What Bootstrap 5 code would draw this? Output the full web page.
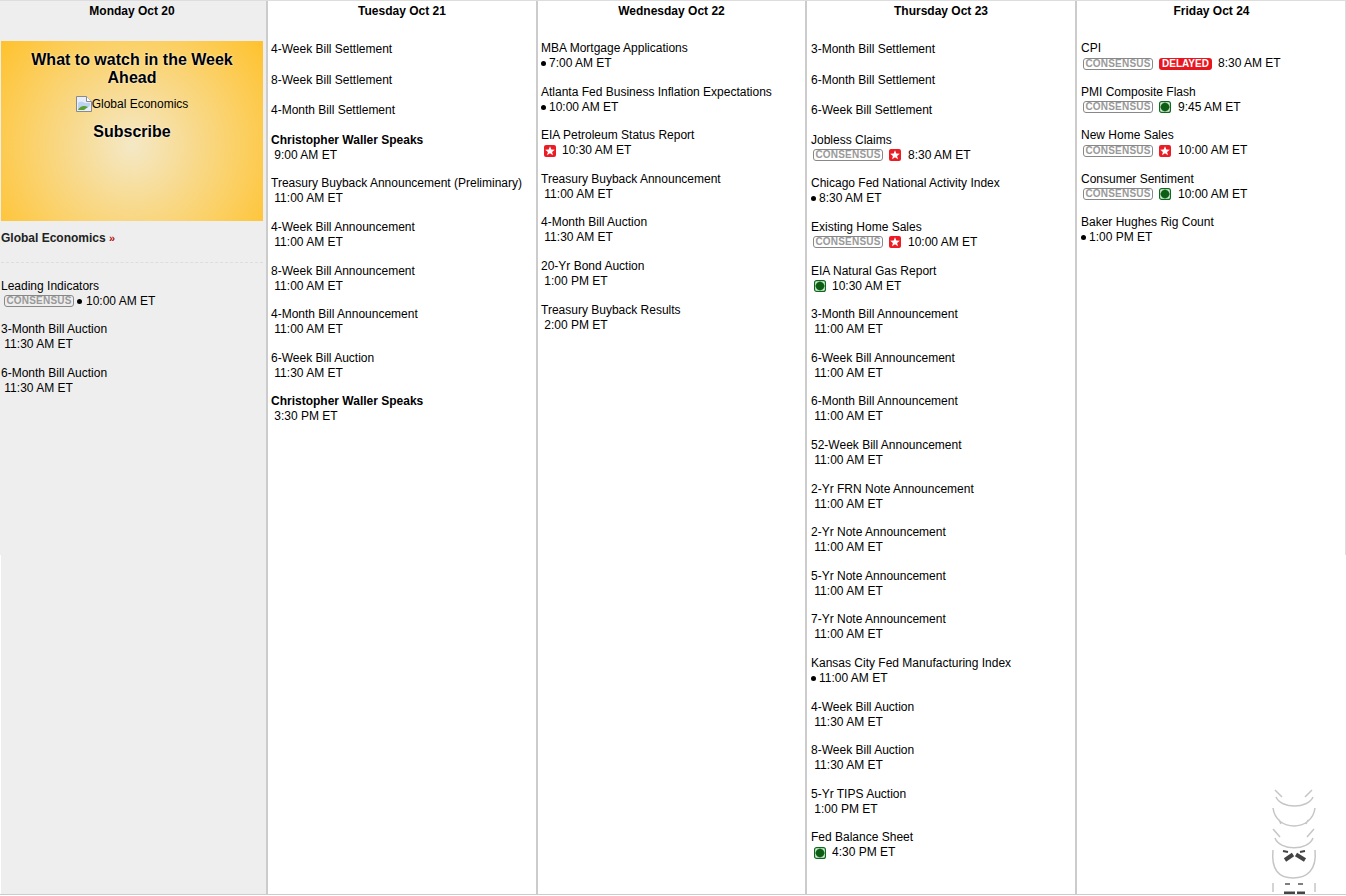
<!DOCTYPE html>
<html lang="en"><head><meta charset="utf-8"><title>Calendar</title>
<link href="https://cdn.jsdelivr.net/npm/bootstrap@5.3.0/dist/css/bootstrap.min.css" rel="stylesheet">
<style>
html,body{background:#fff;overflow:hidden;height:896px}
body{font:12px/15px "Liberation Sans",Arial,sans-serif;color:#000}
.week-grid{height:895px;position:relative;border-top:1px solid #ddd;border-bottom:1px solid #ccc}
.week-grid::before,.week-grid::after{content:"";position:absolute;top:0;width:1px;height:554px}
.week-grid::before{left:0;background:#eee}
.week-grid::after{right:0;background:#ddd}
.day-col{border-right:2px solid #ccc;flex:0 0 auto}
.day-col.c1{width:267px;background:#eee;margin-left:1px}
.day-col.c2{width:270px}.day-col.c3{width:269px}.day-col.c4{width:270px}.day-col.c5{width:269px;border-right:0}
.day-head{font-weight:700;text-align:center;line-height:15px;padding-top:3px;height:18px}
.c1 .day-head{padding-right:3px}
.ev-list{padding:0 3px}
.c4 .ev-list,.c5 .ev-list{padding-left:4px}
.c1 .ev-list{padding:0}
.c2 .ev-list,.c4 .ev-list{padding-top:23.45px}
.c3 .ev-list,.c5 .ev-list{padding-top:22px}
.ev{margin-bottom:13.61px}
.ev.solo{margin-bottom:15.1px}
.ev-name{display:block}
.ev-name.strong{font-weight:700}
.ev-time{display:flex;align-items:center;white-space:pre;height:15px}
.tag-c{font-size:10px;font-weight:700;line-height:10px;letter-spacing:.2px;color:#999;border:1px solid #888;border-radius:3px;width:70px;height:12px;text-align:center;margin-left:2px;margin-right:6px;flex:none}
.c1 .tag-c{margin-left:3px}
.tag-d{font-size:10px;font-weight:700;line-height:12px;color:#fff;background:#e8161e;border-radius:3px;width:53px;height:12px;text-align:center;margin-right:6px;flex:none}
.ico{width:12px;height:12px;flex:none;display:block;margin-right:7px}
.ico.first{margin-left:3px;margin-right:6px}
.dot{width:5px;height:5px;border-radius:50%;background:#000;flex:none;margin-right:3px}
.tag-c + .dot{margin-left:-3px;margin-right:4px}
.promo{width:262px;height:180px;margin-top:22px;background:radial-gradient(circle farthest-corner at 50% 58%,#f4e8c6 0%,#ffc22d 100%);text-align:center;padding-top:10px}
.promo-title{font-size:16px;line-height:18px;font-weight:700;text-shadow:0 0 2px #fff}
.promo-alt{display:flex;justify-content:center;align-items:center;height:16px;margin-top:9px}
.promo-sub{font-size:16px;line-height:18px;font-weight:700;text-shadow:0 0 2px #fff;margin-top:11px}
.promo-link{font-weight:700;margin-top:10px;height:15px;color:#222}
.promo-link b{color:#b01010;font-size:11px}
.promo-rule{border-top:1px dashed #ddd;width:262px;margin:16px 0 15.7px}
.spin{position:absolute;right:26px;bottom:0;width:50px;height:106px}
</style></head><body>
<div class="week-grid d-flex">
<div class="day-col c1"><div class="day-head">Monday Oct 20</div>
<div class="ev-list">
<div class="promo"><div class="promo-title">What to watch in the Week<br>Ahead</div>
<div class="promo-alt"><svg width="16" height="16" viewBox="0 0 16 16"><path d="M.5.5h10l5 5v10H.5z" fill="#e8eef8" stroke="#8a8a8a"/><path d="M10.500.5v5h5" fill="#fff" stroke="#8a8a8a"/><path d="M2 7c2-2 5-1 7 0l5 0v3l-7 4H2z" fill="#bcd4f2"/><path d="M2 14c2-4 6-5 10-3l-4 3z" fill="#5a9e2e"/></svg><span>Global Economics</span></div>
<div class="promo-sub">Subscribe</div></div>
<div class="promo-link">Global Economics <b>»</b></div>
<div class="promo-rule"></div>
<div class="ev"><span class="ev-name">Leading Indicators</span><span class="ev-time"><span class="tag-c">CONSENSUS</span><i class="dot"></i>10:00 AM ET</span></div>
<div class="ev"><span class="ev-name">3-Month Bill Auction</span><span class="ev-time"> 11:30 AM ET</span></div>
<div class="ev"><span class="ev-name">6-Month Bill Auction</span><span class="ev-time"> 11:30 AM ET</span></div>
</div></div>
<div class="day-col c2"><div class="day-head">Tuesday Oct 21</div><div class="ev-list" id="tue"></div></div>
<div class="day-col c3"><div class="day-head">Wednesday Oct 22</div><div class="ev-list" id="wed"></div></div>
<div class="day-col c4"><div class="day-head">Thursday Oct 23</div><div class="ev-list" id="thu"></div></div>
<div class="day-col c5"><div class="day-head">Friday Oct 24</div><div class="ev-list" id="fri"></div></div>
<svg class="spin" viewBox="1270 788 50 106" fill="none" stroke="#c6c6c6" stroke-width="1.500">
<path d="M1275 790l7 7M1312 790l-7 7M1276 797c5 12 32 12 37 0"/>
<path d="M1273 808c3 24 39 24 42 0M1279 820l2 4M1308 820l-2 4"/>
<path d="M1273 829l7 8M1314 829l-7 8M1275 838c5 13 33 13 38 0"/>
<path d="M1273 850c-2 20 6 28 20 28s24-8 22-28"/>
<path d="M1285 860l8-5.500M1305 860l-9-5.500" stroke="#444" stroke-width="4"/><path d="M1283 851l5 1M1305 851l-5 1" stroke="#444" stroke-width="2"/>
<path d="M1273 883v9M1315 883v9"/><path d="M1285 884h5M1298 884h5" stroke="#555" stroke-width="1.500"/><path d="M1284 893h11M1297 893h8" stroke="#444" stroke-width="3"/>
</svg>
</div>
<script>
const star='<svg class="ico" viewBox="0 0 12 12"><rect width="12" height="12" rx="2" fill="#ec1c24"/><path d="M6 1.200 7.300 4.600 10.800 4.700 8.100 6.900 9 10.200 6 8.300 3 10.200 3.900 6.900 1.200 4.700 4.700 4.600z" fill="#fff"/></svg>';
const star1=star.replace('class="ico"','class="ico first"');
const gem='<svg class="ico" viewBox="0 0 12 12"><rect x=".6" y=".6" width="10.800" height="10.800" rx="2" fill="#e6f2e6" stroke="#0a6b1a" stroke-width="1.200"/><path d="M6 1.400 9.200 2.800 10.600 6 9.200 9.200 6 10.600 2.800 9.200 1.400 6 2.800 2.800z" fill="#0b5e14"/></svg>';
const gem1=gem.replace('class="ico"','class="ico first"');
const C='<span class="tag-c">CONSENSUS</span>',D='<span class="tag-d">DELAYED</span>',dot='<i class="dot"></i>';
function ev(n,t,m,b){return t?`<div class="ev"><span class="ev-name${b?' strong':''}">${n}</span><span class="ev-time">${m||' '}${t}</span></div>`:`<div class="ev solo"><span class="ev-name">${n}</span></div>`}
const data={tue:[['4-Week Bill Settlement'],['8-Week Bill Settlement'],['4-Month Bill Settlement'],['Christopher Waller Speaks','9:00 AM ET','',1],['Treasury Buyback Announcement (Preliminary)','11:00 AM ET'],['4-Week Bill Announcement','11:00 AM ET'],['8-Week Bill Announcement','11:00 AM ET'],['4-Month Bill Announcement','11:00 AM ET'],['6-Week Bill Auction','11:30 AM ET'],['Christopher Waller Speaks','3:30 PM ET','',1]],
wed:[['MBA Mortgage Applications','7:00 AM ET',dot],['Atlanta Fed Business Inflation Expectations','10:00 AM ET',dot],['EIA Petroleum Status Report','10:30 AM ET',star1],['Treasury Buyback Announcement','11:00 AM ET'],['4-Month Bill Auction','11:30 AM ET'],['20-Yr Bond Auction','1:00 PM ET'],['Treasury Buyback Results','2:00 PM ET']],
thu:[['3-Month Bill Settlement'],['6-Month Bill Settlement'],['6-Week Bill Settlement'],['Jobless Claims','8:30 AM ET',C+star],['Chicago Fed National Activity Index','8:30 AM ET',dot],['Existing Home Sales','10:00 AM ET',C+star],['EIA Natural Gas Report','10:30 AM ET',gem1],['3-Month Bill Announcement','11:00 AM ET'],['6-Week Bill Announcement','11:00 AM ET'],['6-Month Bill Announcement','11:00 AM ET'],['52-Week Bill Announcement','11:00 AM ET'],['2-Yr FRN Note Announcement','11:00 AM ET'],['2-Yr Note Announcement','11:00 AM ET'],['5-Yr Note Announcement','11:00 AM ET'],['7-Yr Note Announcement','11:00 AM ET'],['Kansas City Fed Manufacturing Index','11:00 AM ET',dot],['4-Week Bill Auction','11:30 AM ET'],['8-Week Bill Auction','11:30 AM ET'],['5-Yr TIPS Auction','1:00 PM ET'],['Fed Balance Sheet','4:30 PM ET',gem1]],
fri:[['CPI','8:30 AM ET',C+D],['PMI Composite Flash','9:45 AM ET',C+gem],['New Home Sales','10:00 AM ET',C+star],['Consumer Sentiment','10:00 AM ET',C+gem],['Baker Hughes Rig Count','1:00 PM ET',dot]]};
for(const k in data)document.getElementById(k).innerHTML=data[k].map(a=>ev(...a)).join('');
</script>
<script src="https://cdn.jsdelivr.net/npm/bootstrap@5.3.0/dist/js/bootstrap.bundle.min.js"></script>
</body></html>
